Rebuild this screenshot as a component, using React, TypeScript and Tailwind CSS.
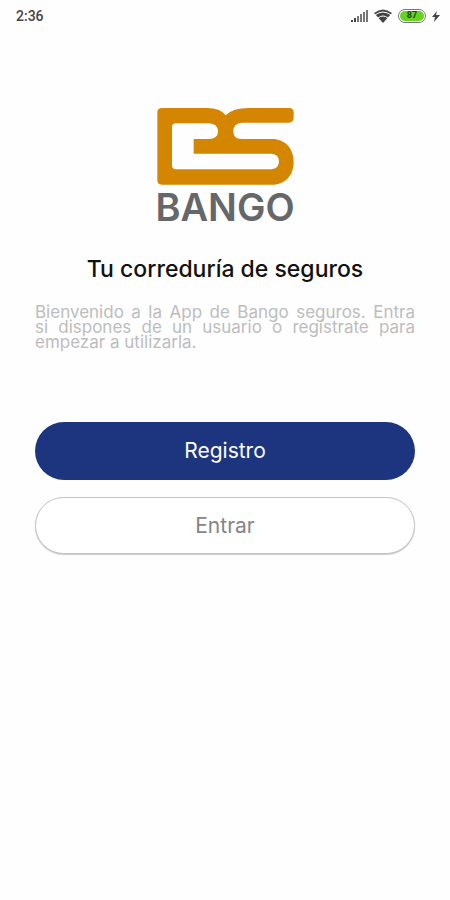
function StatusBar() {
  return (
    <div className="flex h-8 items-center justify-between pr-2.5 pl-4 text-[#444]">
      <span className="font-[Roboto,sans-serif] text-sm font-medium">2:36</span>
      <div className="flex items-center gap-1.5">
        <svg className="h-3 w-4.5" viewBox="0 0 18 12" fill="currentColor" aria-label="Señal">
          <path d="M1 10h2v2H1zM4 8h2v4H4z" />
          <path d="M7 6h2v6H7zM10 4h2v8h-2zM13 2h2v10h-2zM16 0h2v12h-2z" fill="#777" />
        </svg>
        <svg className="h-3.5 w-4.5" viewBox="0 0 18 14" fill="currentColor" aria-label="Wifi">
          <path d="M0 4Q9-3 18 4L9 14Z" />
          <path d="M1 6q8-6 16 0M4 9q5-4 10 0" fill="none" stroke="#fefefe" strokeWidth="1" />
        </svg>
        <div className="flex h-3.5 w-7 items-center rounded-full border border-[#777] p-px">
          <span className="flex h-full w-full items-center justify-center rounded-full bg-[#67d321] font-[Roboto,sans-serif] text-[9px] font-bold text-[#174a08]">87</span>
        </div>
        <svg className="h-3 w-2" viewBox="0 0 8 12" fill="currentColor" aria-label="Cargando">
          <path d="M5 1 0 7h3l-1 5 6-7H4z" />
        </svg>
      </div>
    </div>
  );
}

function Logo() {
  return (
    <div className="flex flex-col items-center">
      <svg className="h-[77px] w-[137px]" viewBox="35 38 411 231" fill="#d58600" aria-hidden="true">
        <path
          fillRule="evenodd"
          d="M50 38H185Q225 38 241 60Q262 38 310 38H432Q445 38 445 52V66Q445 82 430 82H290Q264 84 264 107Q264 131 288 131H380C420 131 445 160 445 199C445 240 420 268 380 268H50Q36 268 36 254V52Q36 38 50 38ZM91 84H190Q218 86 218 108Q218 131 190 131H145V175H378Q401 177 401 198Q401 220 378 222H92Q80 222 80 210V95Q80 84 91 84Z"
        />
      </svg>
      <span className="mt-1 text-[38px] leading-9 font-semibold text-[#66676b]">BANGO</span>
    </div>
  );
}

export default function App() {
  return (
    <div className="min-h-screen bg-[#fefefe] font-[Inter,sans-serif]">
      <StatusBar />
      <main className="px-[35px] pt-[76px]">
        <Logo />
        <h1 className="mt-7 text-center text-[23px] leading-8 font-medium text-[#111]">Tu correduría de seguros</h1>
        <p className="mt-5 text-justify text-[17px] leading-[15px] text-[#bdbdbd]">
          Bienvenido a la App de Bango seguros. Entra si&nbsp;dispones de un usuario o regístrate para empezar a utilizarla.
        </p>
        <div className="mt-18 flex flex-col gap-[17px]">
          <button type="button" className="h-[58px] rounded-full bg-[#1d357f] text-[21px] text-white">Registro</button>
          <button type="button" className="h-[57px] rounded-full border border-[#c4c4c4] bg-white text-[21px] text-[#858585] shadow-[0_1px_1px_#ccc]">Entrar</button>
        </div>
      </main>
    </div>
  );
}
